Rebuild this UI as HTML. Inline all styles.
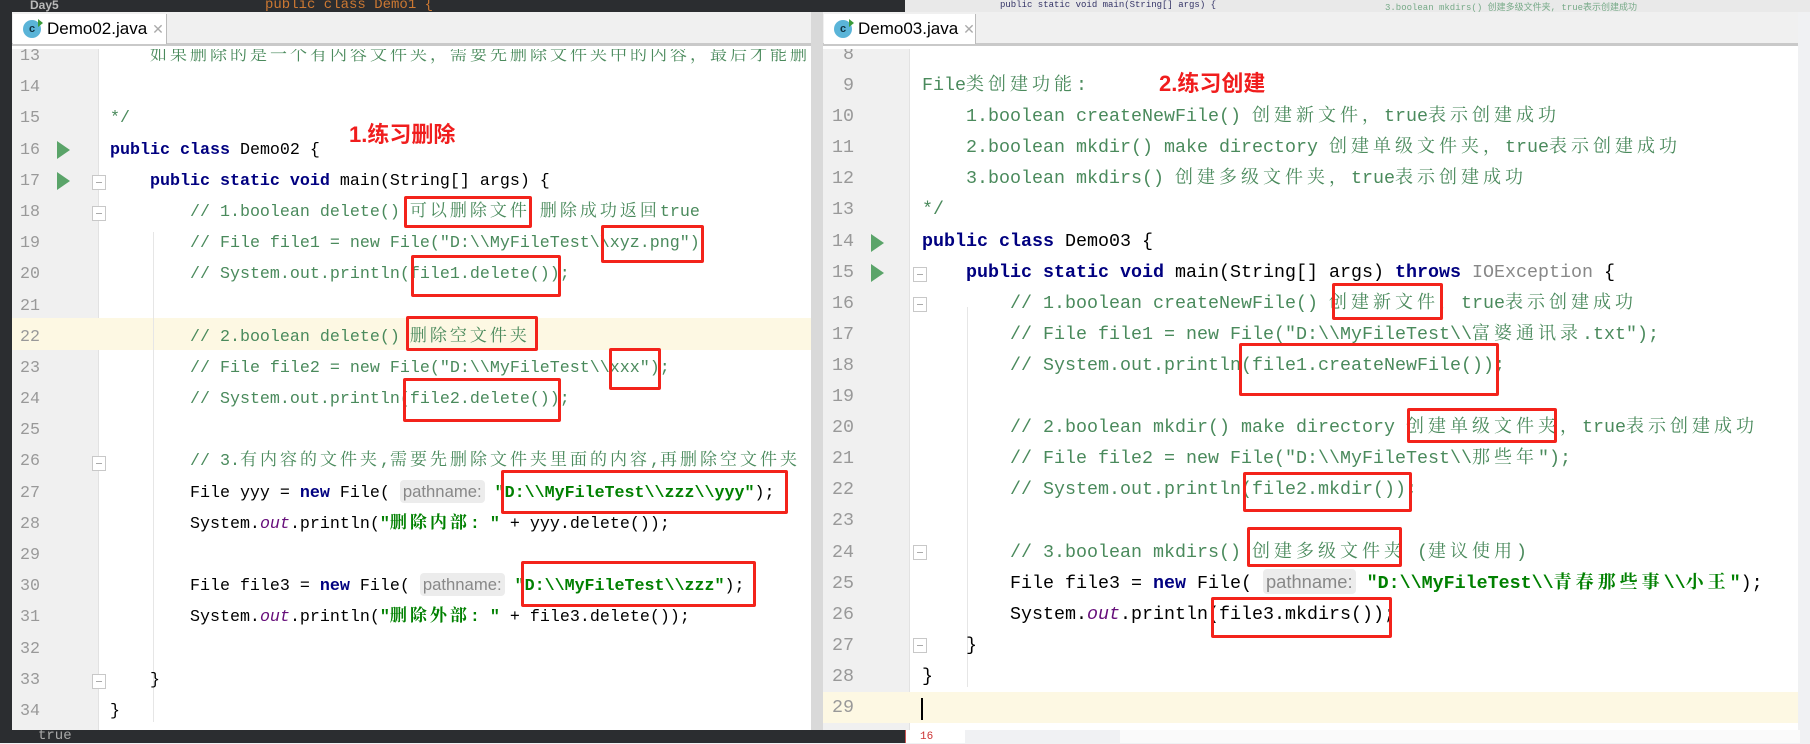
<!DOCTYPE html>
<html><head><meta charset="utf-8">
<style>
*{margin:0;padding:0;box-sizing:border-box}
body{width:1810px;height:743px;position:relative;overflow:hidden;background:#f0f1f3;font-family:"Liberation Mono","Noto Serif CJK SC",monospace}
.abs{position:absolute}
.topd{left:0;top:0;width:905px;height:12px;background:#2b2d30}
.topl{left:905px;top:0;width:905px;height:12px;background:#e9e9e9}
.panel{position:absolute;top:12px;background:#fff;overflow:hidden}
.tabbar{position:absolute;left:0;top:0;right:0;height:34px;background:#f0f0f0;border-bottom:3px solid #c9c9c9}
.tab{position:absolute;top:2px;height:30px;background:#fff;border-right:1px solid #bbb;font:17px "Liberation Sans",sans-serif;color:#000;line-height:30px;padding-left:34px}
.ico{position:absolute;left:10px;top:6px;width:18px;height:18px;border-radius:50%;background:#5ab4d8;color:#134;font:bold 11px "Liberation Sans";text-align:center;line-height:18px}
.ico:after{content:"";position:absolute;right:-2px;top:-1px;border-left:5px solid #3a9b3a;border-top:4px solid transparent;border-bottom:4px solid transparent}
.x{color:#aaa;font-size:14px;margin-left:5px}
.code{position:absolute;top:37px;left:0;right:0;bottom:0;overflow:hidden}
.gut{position:absolute;top:0;bottom:0;left:0;background:#f0f0f0;border-right:1px solid #e2e2e2}
.hl{position:absolute;left:0;right:0;background:#fdf8e3}
.ln{position:absolute;color:#999}
.ln div,.l div{white-space:pre;overflow:visible}
.L .ln div,.L .l div{height:31.2px;line-height:31.2px}
.R .ln div,.R .l div{height:31.1px;line-height:31.1px}
.l{position:absolute;color:#000}
.k{color:#000080;font-weight:bold}
.cm{color:#4a8a5c}
.s{color:#008000;font-weight:bold}
.o{color:#660e7a;font-style:italic}
.c{line-height:1}
.L .c{font-family:"Noto Serif CJK SC",serif;font-size:17px;letter-spacing:3px}
.R .c{font-family:"Noto Serif CJK SC",serif;font-size:18px;letter-spacing:4px}
.h{font-family:"Liberation Sans",sans-serif;color:#888;background:#ececec;border-radius:4px;padding:2px 3px;line-height:1}
.run{position:absolute;width:0;height:0;border-left:13px solid #5aa469;border-top:9px solid transparent;border-bottom:9px solid transparent}
.fold{position:absolute;width:14px;height:15px;border:1px solid #c8c8c8;background:#fff}
.fold:after{content:"";position:absolute;left:3px;top:6px;width:6px;height:1px;background:#aaa}
.guide{position:absolute;width:1px;background:#e6e6e6}
.box{position:absolute;border:3px solid #f3231b;border-radius:2px}
.lab{position:absolute;color:#f01d1d;font:bold 22px "Liberation Sans","Noto Sans CJK SC",sans-serif}
</style></head><body>
<div class="abs topd"></div>
<div class="abs" style="left:30px;top:-2px;color:#bbb;font:bold 12px 'Liberation Sans'">Day5</div>
<div class="abs" style="left:265px;top:-3px;color:#cc7832;font:14px 'Liberation Mono'">public class Demo1 {</div>
<div class="abs topl"></div>
<div class="abs" style="left:1000px;top:0px;color:#336;font:9px 'Liberation Mono'">public static void main(String[] args) {</div>
<div class="abs" style="left:1385px;top:0px;color:#7a8;font:9px 'Liberation Mono','Noto Sans CJK SC'">3.boolean mkdirs() 创建多级文件夹, true表示创建成功</div>
<div class="abs" style="left:0;top:12px;width:12px;height:731px;background:#2b2d30"></div>
<div class="abs" style="left:0;top:730px;width:905px;height:13px;background:#2b2d30"></div>
<div class="abs" style="left:38px;top:728px;color:#aaa;font:14px 'Liberation Mono'">true</div>
<div class="abs" style="left:905px;top:730px;width:60px;height:13px;background:#fff;border-left:1px solid #c55"></div>
<div class="abs" style="left:920px;top:731px;color:#c33;font:11px 'Liberation Mono'">16</div>
<div class="abs" style="left:1120px;top:730px;width:680px;height:13px;background:#fafafa"></div>

<!-- LEFT PANEL -->
<div class="panel L" style="left:12px;width:799px;height:718px">
 <div class="tabbar"></div>
 <div class="tab" style="left:1px;width:154px"><span class="ico">c</span>Demo02.java<span class="x">✕</span></div>
 <div class="code" style="font-size:16.67px">
  <div class="gut" style="width:87px"></div>
  <div class="hl" style="top:269px;height:32px"></div>
  <div class="guide" style="left:141px;top:183px;height:490px"></div>
  <div class="run" style="left:45px;top:92px"></div>
  <div class="run" style="left:45px;top:123px"></div>
  <div class="fold" style="left:80px;top:126px"></div>
  <div class="fold" style="left:80px;top:157px"></div>
  <div class="fold" style="left:80px;top:407px"></div>
  <div class="fold" style="left:80px;top:625px"></div>
  <div class="ln" style="left:8px;top:-8px"><div>13</div><div>14</div><div>15</div><div>16</div><div>17</div><div>18</div><div>19</div><div>20</div><div>21</div><div>22</div><div>23</div><div>24</div><div>25</div><div>26</div><div>27</div><div>28</div><div>29</div><div>30</div><div>31</div><div>32</div><div>33</div><div>34</div></div>
  <div class="l" style="left:98px;top:-8px">
<div><span class="cm">    <span class="c">如果删除的是一个有内容文件夹，需要先删除文件夹中的内容，最后才能删除</span></span></div>
<div> </div>
<div><span class="cm">*/</span></div>
<div><span class="k">public class</span> Demo02 {</div>
<div>    <span class="k">public static void</span> main(String[] args) {</div>
<div>        <span class="cm">// 1.boolean delete() <span class="c">可以删除文件</span> <span class="c">删除成功返回</span>true</span></div>
<div>        <span class="cm">// File file1 = new File("D:\\MyFileTest\\xyz.png")</span></div>
<div>        <span class="cm">// System.out.println(file1.delete());</span></div>
<div> </div>
<div>        <span class="cm">// 2.boolean delete() <span class="c">删除空文件夹</span></span></div>
<div>        <span class="cm">// File file2 = new File("D:\\MyFileTest\\xxx");</span></div>
<div>        <span class="cm">// System.out.println(file2.delete());</span></div>
<div> </div>
<div>        <span class="cm">// 3.<span class="c">有内容的文件夹</span>,<span class="c">需要先删除文件夹里面的内容</span>,<span class="c">再删除空文件夹</span></span></div>
<div>        File yyy = <span class="k">new</span> File( <span class="h">pathname:</span> <span class="s">"D:\\MyFileTest\\zzz\\yyy"</span>);</div>
<div>        System.<span class="o">out</span>.println(<span class="s">"<span class="c">删除内部</span>: "</span> + yyy.delete());</div>
<div> </div>
<div>        File file3 = <span class="k">new</span> File( <span class="h">pathname:</span> <span class="s">"D:\\MyFileTest\\zzz"</span>);</div>
<div>        System.<span class="o">out</span>.println(<span class="s">"<span class="c">删除外部</span>: "</span> + file3.delete());</div>
<div> </div>
<div>    }</div>
<div>}</div>
  </div>
 </div>
</div>
<div class="abs" style="left:811px;top:12px;width:12px;height:718px;background:#d9d9d9"></div>

<!-- RIGHT PANEL -->
<div class="panel R" style="left:823px;width:975px;height:718px">
 <div class="tabbar"></div>
 <div class="tab" style="left:1px;width:152px"><span class="ico">c</span>Demo03.java<span class="x">✕</span></div>
 <div class="code" style="font-size:18.33px">
  <div class="gut" style="width:87px"></div>
  <div class="hl" style="top:643px;height:31px"></div>
  <div class="guide" style="left:144px;top:258px;height:380px"></div>
  <div class="run" style="left:48px;top:185px"></div>
  <div class="run" style="left:48px;top:215px"></div>
  <div class="fold" style="left:90px;top:218px"></div>
  <div class="fold" style="left:90px;top:248px"></div>
  <div class="fold" style="left:90px;top:496px"></div>
  <div class="fold" style="left:90px;top:589px"></div>
  <div class="ln" style="left:9px;top:-10px"><div> 8</div><div> 9</div><div>10</div><div>11</div><div>12</div><div>13</div><div>14</div><div>15</div><div>16</div><div>17</div><div>18</div><div>19</div><div>20</div><div>21</div><div>22</div><div>23</div><div>24</div><div>25</div><div>26</div><div>27</div><div>28</div><div>29</div></div>
  <div class="l" style="left:99px;top:-10px">
<div> </div>
<div><span class="cm">File<span class="c">类创建功能</span>:</span></div>
<div><span class="cm">    1.boolean createNewFile() <span class="c">创建新文件，</span>true<span class="c">表示创建成功</span></span></div>
<div><span class="cm">    2.boolean mkdir() make directory <span class="c">创建单级文件夹，</span>true<span class="c">表示创建成功</span></span></div>
<div><span class="cm">    3.boolean mkdirs() <span class="c">创建多级文件夹，</span>true<span class="c">表示创建成功</span></span></div>
<div><span class="cm">*/</span></div>
<div><span class="k">public class</span> Demo03 {</div>
<div>    <span class="k">public static void</span> main(String[] args) <span class="k">throws</span> <span style="color:#888">IOException</span> {</div>
<div>        <span class="cm">// 1.boolean createNewFile() <span class="c">创建新文件，</span>true<span class="c">表示创建成功</span></span></div>
<div>        <span class="cm">// File file1 = new File("D:\\MyFileTest\\<span class="c">富婆通讯录</span>.txt");</span></div>
<div>        <span class="cm">// System.out.println(file1.createNewFile());</span></div>
<div> </div>
<div>        <span class="cm">// 2.boolean mkdir() make directory <span class="c">创建单级文件夹，</span>true<span class="c">表示创建成功</span></span></div>
<div>        <span class="cm">// File file2 = new File("D:\\MyFileTest\\<span class="c">那些年</span>");</span></div>
<div>        <span class="cm">// System.out.println(file2.mkdir());</span></div>
<div> </div>
<div>        <span class="cm">// 3.boolean mkdirs() <span class="c">创建多级文件夹</span> (<span class="c">建议使用</span>)</span></div>
<div>        File file3 = <span class="k">new</span> File( <span class="h">pathname:</span> <span class="s">"D:\\MyFileTest\\<span class="c">青春那些事</span>\\<span class="c">小王</span>"</span>);</div>
<div>        System.<span class="o">out</span>.println(file3.mkdirs());</div>
<div>    }</div>
<div>}</div>
<div> </div>
  </div>
  <div class="abs" style="left:98px;top:649px;width:2px;height:22px;background:#000"></div>
 </div>
</div>

<!-- labels -->
<div class="lab" style="left:349px;top:117px">1.练习删除</div>
<div class="lab" style="left:1159px;top:66px">2.练习创建</div>

<!-- red boxes left -->
<div class="box" style="left:404px;top:196px;width:128px;height:32px"></div>
<div class="box" style="left:601px;top:225px;width:103px;height:38px"></div>
<div class="box" style="left:411px;top:255px;width:150px;height:42px"></div>
<div class="box" style="left:406px;top:316px;width:132px;height:35px"></div>
<div class="box" style="left:609px;top:348px;width:52px;height:42px"></div>
<div class="box" style="left:403px;top:378px;width:158px;height:44px"></div>
<div class="box" style="left:501px;top:470px;width:287px;height:44px"></div>
<div class="box" style="left:521px;top:561px;width:235px;height:46px"></div>
<!-- red boxes right -->
<div class="box" style="left:1332px;top:283px;width:111px;height:37px"></div>
<div class="box" style="left:1239px;top:343px;width:260px;height:53px"></div>
<div class="box" style="left:1407px;top:408px;width:150px;height:35px"></div>
<div class="box" style="left:1243px;top:472px;width:169px;height:40px"></div>
<div class="box" style="left:1247px;top:527px;width:155px;height:40px"></div>
<div class="box" style="left:1211px;top:597px;width:181px;height:41px"></div>
</body></html>
